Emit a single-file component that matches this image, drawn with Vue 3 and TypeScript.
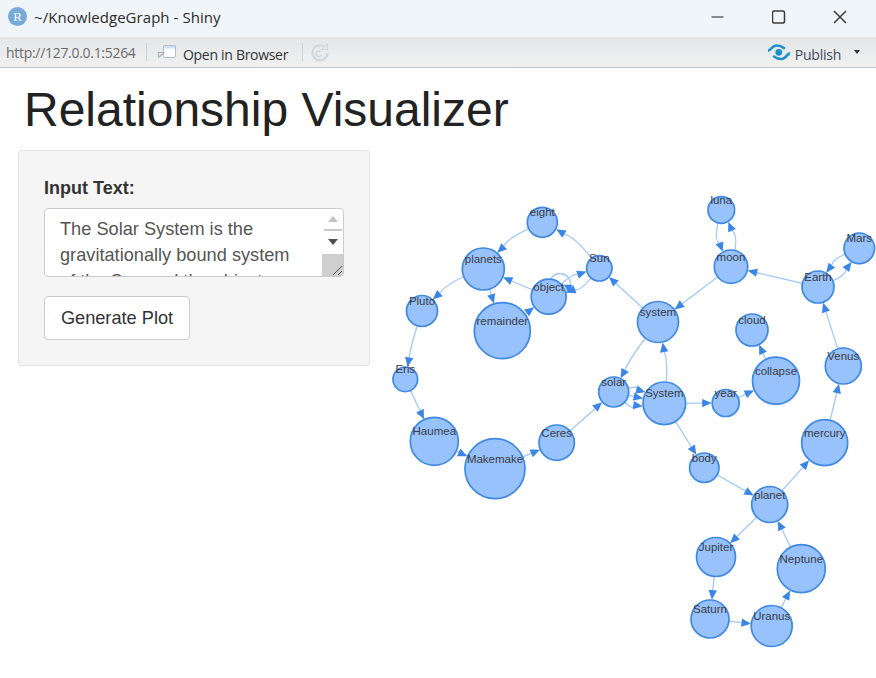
<script setup lang="ts">
interface GraphNode { id: string; x: number; y: number; r: number }
const nodes: GraphNode[] = [
  { id: 'eight', x: 542.3, y: 222.3, r: 15 },
  { id: 'planets', x: 483.3, y: 269, r: 21 },
  { id: 'object', x: 548.7, y: 296.7, r: 17.5 },
  { id: 'Sun', x: 599.3, y: 268.3, r: 12.7 },
  { id: 'Pluto', x: 422, y: 311, r: 15.5 },
  { id: 'remainder', x: 502.3, y: 330.7, r: 28 },
  { id: 'luna', x: 721.3, y: 210, r: 13.3 },
  { id: 'moon', x: 731, y: 266.7, r: 16.7 },
  { id: 'Mars', x: 859.3, y: 248.3, r: 15.3 },
  { id: 'Earth', x: 818, y: 287, r: 16 },
  { id: 'system', x: 658, y: 322, r: 20.5 },
  { id: 'cloud', x: 752, y: 330, r: 16 },
  { id: 'Venus', x: 843.3, y: 366, r: 18 },
  { id: 'Eris', x: 405.3, y: 379.3, r: 12.3 },
  { id: 'Haumea', x: 434.3, y: 441.3, r: 24 },
  { id: 'Makemake', x: 495, y: 468.7, r: 30 },
  { id: 'Ceres', x: 556.7, y: 442.7, r: 17.7 },
  { id: 'solar', x: 613.7, y: 392, r: 15 },
  { id: 'System', x: 664.3, y: 403.3, r: 21.3 },
  { id: 'year', x: 725.7, y: 403, r: 13.5 },
  { id: 'collapse', x: 776, y: 380.7, r: 23.5 },
  { id: 'mercury', x: 824.7, y: 442.7, r: 23 },
  { id: 'body', x: 704.3, y: 467.7, r: 14.7 },
  { id: 'planet', x: 769.7, y: 504.5, r: 18 },
  { id: 'Jupiter', x: 716, y: 557, r: 19.5 },
  { id: 'Neptune', x: 801.3, y: 568.7, r: 24 },
  { id: 'Saturn', x: 710, y: 619, r: 19 },
  { id: 'Uranus', x: 771.7, y: 626, r: 20.5 },
]

const edgeDefs: [string, string, number][] = [
  ['eight', 'planets', -10], ['Sun', 'eight', -10], ['planets', 'Pluto', -10],
  ['planets', 'remainder', 0], ['object', 'planets', 0], ['remainder', 'object', 0],
  ['object', 'Sun', 10], ['Sun', 'object', 12], ['Pluto', 'Eris', -3],
  ['Eris', 'Haumea', 0], ['Haumea', 'Makemake', 0], ['Makemake', 'Ceres', 0],
  ['Ceres', 'solar', 0], ['solar', 'System', 14], ['solar', 'System', 0],
  ['solar', 'System', -16], ['system', 'solar', -5], ['System', 'system', -8],
  ['system', 'Sun', 0], ['moon', 'system', 0], ['Earth', 'moon', 0],
  ['luna', 'moon', -14], ['moon', 'luna', -14], ['Mars', 'Earth', -12],
  ['Earth', 'Mars', -12], ['Venus', 'Earth', 0], ['collapse', 'cloud', 0],
  ['year', 'collapse', 0], ['System', 'year', 0], ['System', 'body', 0],
  ['body', 'planet', 0], ['planet', 'mercury', 0], ['mercury', 'Venus', 0],
  ['planet', 'Jupiter', 0], ['Jupiter', 'Saturn', 0], ['Saturn', 'Uranus', 0],
  ['Uranus', 'Neptune', 0], ['Neptune', 'planet', 0],
]

const byId = new Map(nodes.map((n) => [n.id, n]))

const edges = edgeDefs.map(([from, to, bend], i) => {
  const a = byId.get(from)!
  const b = byId.get(to)!
  const dx = b.x - a.x
  const dy = b.y - a.y
  const len = Math.hypot(dx, dy)
  const cx = (a.x + b.x) / 2 + (dy / len) * bend
  const cy = (a.y + b.y) / 2 - (dx / len) * bend
  const at = (t: number): [number, number] => {
    const u = 1 - t
    return [u * u * a.x + 2 * u * t * cx + t * t * b.x, u * u * a.y + 2 * u * t * cy + t * t * b.y]
  }
  let tEnd = 1
  while (tEnd > 0) {
    const [px, py] = at(tEnd)
    if (Math.hypot(px - b.x, py - b.y) >= b.r + 0.3) break
    tEnd -= 0.004
  }
  const [tx, ty] = at(tEnd)
  const [sx, sy] = at(tEnd - 0.06)
  const l = Math.hypot(tx - sx, ty - sy)
  const ux = (tx - sx) / l
  const uy = (ty - sy) / l
  const size = 9.5
  const bx = tx - ux * size
  const by = ty - uy * size
  const hw = 4.2
  const arrow = `${tx},${ty} ${bx - uy * hw},${by + ux * hw} ${bx + uy * hw},${by - ux * hw}`
  const d = `M${a.x} ${a.y}Q${cx} ${cy} ${bx} ${by}`
  return { key: `${from}-${to}-${i}`, d, arrow }
})
</script>

<template>
  <div class="window">
    <header class="titlebar">
      <div class="title-left">
        <span class="r-logo">R</span>
        <span class="title">~/KnowledgeGraph - Shiny</span>
      </div>
      <div class="controls">
        <svg width="14" height="14" viewBox="0 0 14 14"><path d="M0.500 7h12" class="ctl ctl-min" /></svg>
        <svg width="14" height="14" viewBox="0 0 14 14"><rect x="0.500" y="1" width="12" height="12" rx="1.800" class="ctl" /></svg>
        <svg width="14" height="14" viewBox="0 0 14 14"><path d="M1 1l12 12M13 1L1 13" class="ctl" /></svg>
      </div>
    </header>

    <nav class="toolbar">
      <span class="url">http://127.0.0.1:5264</span>
      <span class="sep"></span>
      <span class="open">
        <svg width="20" height="16" viewBox="0 0 20 16">
          <rect x="6.500" y="1.500" width="12" height="12" rx="1" fill="#fff" stroke="#b5bcc4" />
          <rect x="7" y="2" width="11" height="2.500" fill="#cfe0f2" />
          <path d="M1.500 13.500v-5h5M1.500 13.500l6-5" fill="none" stroke="#aab2ba" stroke-width="1.200" />
        </svg>
        <span class="low">Open in Browser</span>
      </span>
      <span class="sep sep2"></span>
      <svg class="refresh" width="20" height="20" viewBox="0 0 20 20">
        <path d="M15.500 5.500A7.600 7.600 0 1 0 17.600 11" fill="none" stroke="#d2d6da" stroke-width="2" />
        <path d="M10.500 9.500A2.800 2.800 0 1 0 11.500 13" fill="none" stroke="#d2d6da" stroke-width="1.500" />
        <path d="M17.500 1.500v6h-6z" fill="#e4e7ea" stroke="#d2d6da" />
      </svg>
      <span class="publish">
        <svg width="22" height="17" viewBox="0 0 22 17">
          <path d="M0.500 6.500C3 6 4 1.500 8.500 1.500c3 0 5.500 1 7.500 2.500" fill="none" stroke="#1f8fc9" stroke-width="2.600" stroke-linecap="round" />
          <path d="M21.500 9.500C19 10 18 15 13.500 15c-3 0-5.500-1-7.500-2.500" fill="none" stroke="#1f8fc9" stroke-width="2.600" stroke-linecap="round" />
          <circle cx="10.800" cy="8.300" r="3.400" fill="#1f8fc9" />
        </svg>
        <span class="low">Publish</span>
        <i class="caret"></i>
      </span>
    </nav>

    <main class="page">
      <h1>Relationship Visualizer</h1>
      <div class="row">
        <section class="well">
          <label class="label">Input Text:</label>
          <div class="textarea">
            <div class="ta-text">The Solar System is the gravitationally bound system of the Sun and the objects that orbit it</div>
            <div class="ta-scroll">
              <i class="up"></i>
              <i class="rule"></i>
              <i class="down"></i>
              <div class="thumb">
                <svg width="12" height="12" viewBox="0 0 12 12"><path d="M2 11l9-9M7 11l4-4" stroke="#555" fill="none" /></svg>
              </div>
            </div>
          </div>
          <button class="btn" type="button">Generate Plot</button>
        </section>

        <svg class="graph" width="496" height="528" viewBox="380 150 496 528">
          <g fill="none" stroke="#a3c9f8" stroke-width="1.300">
            <path v-for="e in edges" :key="e.key" :d="e.d" />
            <circle cx="560" cy="284" r="10.500" />
          </g>
          <g fill="#3a86e6">
            <polygon v-for="e in edges" :key="'a' + e.key" :points="e.arrow" />
            <polygon points="568.500,293 564,284.500 572.500,285" />
          </g>
          <g v-for="n in nodes" :key="n.id">
            <circle :cx="n.x" :cy="n.y" :r="n.r" fill="#97c2fc" stroke="#3f88e4" stroke-width="1.700" />
          </g>
          <text v-for="n in nodes" :key="'t' + n.id" class="node-label" :x="n.x" :y="n.y - 6">{{ n.id }}</text>
        </svg>
      </div>
    </main>
  </div>
</template>

<style>
html, body { margin: 0; background: #fff; }
</style>

<style scoped>
.window {
  width: 876px;
  height: 678px;
  overflow: hidden;
  display: flex;
  flex-direction: column;
  background: #fff;
  font-family: "Liberation Sans", Arial, sans-serif;
}
.titlebar {
  height: 37px;
  flex: none;
  display: flex;
  align-items: center;
  justify-content: space-between;
  background: #f0f5f9;
  padding: 0 29px 4px 8px;
  box-sizing: border-box;
}
.title-left { display: flex; align-items: center; gap: 7px; }
.r-logo {
  width: 19px;
  height: 19px;
  border-radius: 50%;
  background: #75aadb;
  color: #fff;
  font: 13px/19px "Liberation Serif", serif;
  text-align: center;
}
.title { font: 15px "Open Sans", sans-serif; color: #2b2b2b; letter-spacing: 0.05px; }
.controls { display: flex; gap: 47px; }
.controls svg { display: block; }
.ctl { fill: none; stroke: #3c3c3c; stroke-width: 1.500; }
.ctl-min { stroke: #666; }
.toolbar {
  height: 31px;
  flex: none;
  display: flex;
  align-items: center;
  box-sizing: border-box;
  padding: 0 16px 0 6px;
  background: linear-gradient(#e4e6e8, #f0f0f0);
  border-bottom: 1px solid #b9c6d4;
}
.url { font: 14px "Open Sans", sans-serif; color: #6b6b6b; width: 140px; white-space: nowrap; letter-spacing: -0.3px; }
.sep { width: 1px; height: 18px; background: #cfd2d5; flex: none; }
.low { padding-top: 4px; }
.open { display: flex; align-items: center; gap: 6px; margin-left: 10px; font: 14px "Open Sans", sans-serif; color: #333; width: 145px; white-space: nowrap; letter-spacing: -0.3px; }
.refresh { margin-left: 7px; }
.publish { margin-left: auto; display: flex; align-items: center; gap: 5px; font: 14px "Open Sans", sans-serif; color: #3d4a5c; letter-spacing: -0.25px; }
.caret { width: 0; height: 0; border: 3.500px solid transparent; border-top: 4px solid #333; border-bottom: 0; margin-left: 8px; }
.page { flex: 1; display: flex; flex-direction: column; }
h1 {
  margin: 13px 0 0 24px;
  height: 69px;
  font-size: 48px;
  line-height: 58px;
  font-weight: 400;
  color: #222;
  white-space: nowrap;
}
.row { display: flex; gap: 10px; align-items: flex-start; padding-left: 18px; }
.well {
  width: 352px;
  height: 216px;
  flex: none;
  box-sizing: border-box;
  padding: 27px 25px 0;
  background: #f5f5f5;
  border: 1px solid #e3e3e3;
  border-radius: 4px;
  display: flex;
  flex-direction: column;
  align-items: flex-start;
}
.label { font-size: 18px; line-height: 20px; font-weight: 700; color: #333; }
.textarea {
  margin-top: 10px;
  width: 300px;
  height: 69px;
  box-sizing: border-box;
  border: 1px solid #ccc;
  border-radius: 4px;
  background: #fff;
  display: flex;
  overflow: hidden;
}
.ta-text {
  flex: 1;
  min-width: 0;
  overflow: hidden;
  padding: 7px 25px 0 15px;
  font-size: 18.200px;
  line-height: 26px;
  color: #555;
}
.ta-scroll {
  width: 21px;
  flex: none;
  display: flex;
  flex-direction: column;
  align-items: center;
}
.up { margin-top: 7px; border: 5px solid transparent; border-bottom: 6px solid #c2c2c2; border-top: 0; }
.rule { margin-top: 7px; width: 18px; height: 2px; background: #c8c8c8; }
.down { margin-top: 8px; border: 5px solid transparent; border-top: 6px solid #505050; border-bottom: 0; }
.thumb {
  margin-top: auto;
  width: 100%;
  height: 22px;
  background: #cfcfcf;
  display: flex;
  align-items: flex-end;
  justify-content: flex-end;
}
.thumb svg { display: block; }
.btn {
  margin-top: 19px;
  width: 146px;
  height: 44px;
  border: 1px solid #ccc;
  border-radius: 4px;
  background: #fff;
  color: #333;
  font: 18.200px "Liberation Sans", Arial, sans-serif;
  padding: 0;
}
.graph { flex: none; display: block; }
.node-label {
  font: 11.500px "Liberation Sans", Arial, sans-serif;
  fill: #3a3a42;
  text-anchor: middle;
}
</style>
